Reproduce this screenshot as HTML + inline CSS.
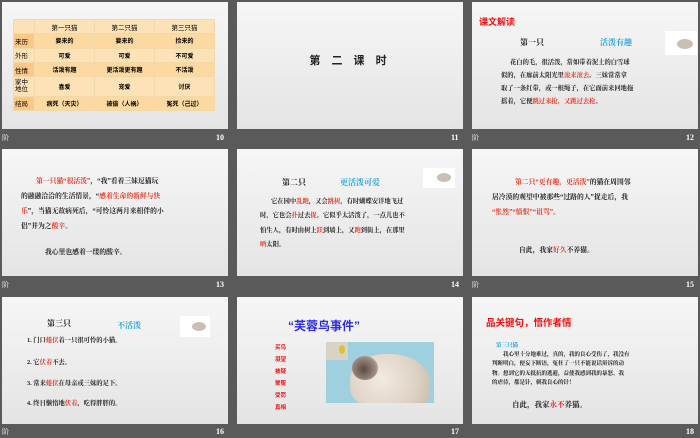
<!DOCTYPE html>
<html><head><meta charset="utf-8"><style>
*{margin:0;padding:0;box-sizing:border-box}
body{width:700px;height:438px;background:#5a5a5a;position:relative;overflow:hidden;font-family:"Liberation Serif","Noto Serif CJK SC",serif;}
.s{position:absolute;width:226px;height:127px;background:linear-gradient(#f6f6f6,#e4e4e4);overflow:hidden}
.a{position:absolute;white-space:nowrap}
.r{color:#e8321e}.b{color:#1aa3e0}
.lab{position:absolute;color:#fff;font-size:8px;font-weight:bold}
.p{position:absolute;font-size:6.3px;font-weight:bold;color:#222;white-space:nowrap}
table{border-collapse:collapse;position:absolute;left:11px;top:17px;width:202px;height:92px;font-size:6px;font-family:"Liberation Sans","Noto Sans CJK SC",sans-serif}
td{border:1px solid #f3d9a8;text-align:center;background:#fbd9a0;font-weight:bold}
tr:first-child td{background:#fcd6a0;font-weight:normal;font-size:6.5px}
td.h{background:#fbc888;font-weight:normal;font-size:6.5px;text-align:left;padding-left:1px}
tr:nth-child(odd) td{background:#fde2b8}
.cat{position:absolute;background:#fff}
</style></head><body>

<!-- slide 10 -->
<div class="s" style="left:2px;top:2px">
<table>
<tr><td class="h" style="width:21px"></td><td>第一只猫</td><td>第二只猫</td><td>第三只猫</td></tr>
<tr><td class="h">来历</td><td>要来的</td><td>要来的</td><td>捡来的</td></tr>
<tr><td class="h">外形</td><td>可爱</td><td>可爱</td><td>不可爱</td></tr>
<tr><td class="h">性情</td><td>活泼有趣</td><td>更活泼更有趣</td><td>不活泼</td></tr>
<tr><td class="h" style="line-height:7px">家中<br>地位</td><td>喜爱</td><td>宠爱</td><td>讨厌</td></tr>
<tr><td class="h">结局</td><td>病死（天灾）</td><td>被偷（人祸）</td><td>冤死（己过）</td></tr>
</table>
</div>
<div class="lab" style="left:2px;top:133px;font-weight:normal;font-size:7px">阶</div>
<div class="lab" style="left:216px;top:133px">10</div>

<!-- slide 11 -->
<div class="s" style="left:237px;top:2px">
<div class="a" style="left:0;width:226px;text-align:center;top:50px;font-size:11px;font-weight:bold;color:#222;font-family:'Liberation Sans','Noto Sans CJK SC',sans-serif;letter-spacing:4px">第 二 课 时</div>
</div>
<div class="lab" style="left:451px;top:133px">11</div>

<!-- slide 12 -->
<div class="s" style="left:472px;top:2px">
<div class="a" style="left:7px;top:13px;font-size:9px;font-weight:bold;color:#f01010;font-family:'Liberation Sans','Noto Sans CJK SC',sans-serif">课文解读</div>
<div class="a" style="left:48px;top:35px;font-size:8px;font-weight:bold;color:#222">第一只</div>
<div class="a b" style="left:128px;top:35px;font-size:8px;font-weight:bold">活泼有趣</div>
<div class="cat" style="left:193px;top:29px;width:32px;height:24px"><div style="position:absolute;left:12px;top:8px;width:16px;height:10px;border-radius:50%;background:#c9bfb2"></div></div>
<div class="p" style="left:38px;top:55px">花白的毛，很活泼，常如带着泥土的白雪球</div>
<div class="p" style="left:29px;top:68px">似的，在廊前太阳光里<span class="r">滚来滚去</span>。三妹常常拿</div>
<div class="p" style="left:29px;top:81px">取了一条红带，或一根绳子，在它面前来回地拖</div>
<div class="p" style="left:29px;top:94px">摇着，它便<span class="r">跳过来抢，又跳过去抢</span>。</div>
</div>
<div class="lab" style="left:472px;top:133px;font-weight:normal;font-size:7px">阶</div>
<div class="lab" style="left:686px;top:133px">12</div>

<!-- slide 13 -->
<div class="s" style="left:2px;top:149px">
<div class="p" style="left:34px;top:26px;font-size:6.8px"><span class="r">第一只猫“很活泼”</span>，“我”看着三妹逗猫玩</div>
<div class="p" style="left:19px;top:41px;font-size:6.8px">的融融洽洽的生活情景，“<span class="r">感着生命的新鲜与快</span></div>
<div class="p" style="left:19px;top:56px;font-size:6.8px"><span class="r">乐</span>”，当猫无故病死后，“可怜这两月来相伴的小</div>
<div class="p" style="left:19px;top:71px;font-size:6.8px">侣”并为之<span class="r">酸辛</span>。</div>
<div class="p" style="left:43px;top:97px;font-size:6.8px">我心里也感着一缕的酸辛。</div>
</div>
<div class="lab" style="left:2px;top:280px;font-weight:normal;font-size:7px">阶</div>
<div class="lab" style="left:216px;top:280px">13</div>

<!-- slide 14 -->
<div class="s" style="left:237px;top:149px">
<div class="a" style="left:45px;top:28px;font-size:8px;font-weight:bold;color:#222">第二只</div>
<div class="a b" style="left:103px;top:28px;font-size:8px;font-weight:bold">更活泼可爱</div>
<div class="cat" style="left:186px;top:19px;width:32px;height:20px"><div style="position:absolute;left:14px;top:5px;width:14px;height:9px;border-radius:50%;background:#c9bfb2"></div></div>
<div class="p" style="left:34px;top:47px">它在园中<span class="r">乱跑</span>，又会<span class="r">跳树</span>，有时蝴蝶安详地飞过</div>
<div class="p" style="left:23px;top:61px">时，它也会<span class="r">扑</span>过去<span class="r">捉</span>。它似乎太活泼了，一点儿也不</div>
<div class="p" style="left:23px;top:76px">怕生人，有时由树上<span class="r">跃</span>到墙上，又<span class="r">跑</span>到街上，在那里</div>
<div class="p" style="left:23px;top:90px"><span class="r">晒</span>太阳。</div>
</div>
<div class="lab" style="left:451px;top:280px">14</div>

<!-- slide 15 -->
<div class="s" style="left:472px;top:149px">
<div class="p" style="left:43px;top:27px;font-size:6.8px"><span class="r">第二只“更有趣，更活泼”</span>的猫在周围邻</div>
<div class="p" style="left:20px;top:42px;font-size:6.8px">居冷漠的观望中被那些“过路的人”捉走后，我</div>
<div class="p" style="left:20px;top:57px;font-size:6.8px"><span class="r">“怅然”“愤恨”“诅骂”</span>。</div>
<div class="p" style="left:47px;top:95px;font-size:6.8px">自此，我家<span class="r">好久</span>不养猫。</div>
</div>
<div class="lab" style="left:472px;top:280px;font-weight:normal;font-size:7px">阶</div>
<div class="lab" style="left:686px;top:280px">15</div>

<!-- slide 16 -->
<div class="s" style="left:2px;top:297px">
<div class="a" style="left:45px;top:21px;font-size:8px;font-weight:bold;color:#222">第三只</div>
<div class="a b" style="left:115px;top:23px;font-size:8px;font-weight:bold">不活泼</div>
<div class="cat" style="left:178px;top:19px;width:30px;height:21px"><div style="position:absolute;left:12px;top:6px;width:14px;height:9px;border-radius:50%;background:#c9bfb2"></div></div>
<div class="p" style="left:25px;top:38px">1. 门口<span class="r">蜷伏</span>着一只很可怜的小猫。</div>
<div class="p" style="left:25px;top:60px">2. 它<span class="r">伏着</span>不去。</div>
<div class="p" style="left:25px;top:81px">3. 常来<span class="r">蜷伏</span>在母亲或三妹的足下。</div>
<div class="p" style="left:25px;top:101px">4. 终日懒惰地<span class="r">伏着</span>，吃得胖胖的。</div>
</div>
<div class="lab" style="left:2px;top:427px;font-weight:normal;font-size:7px">阶</div>
<div class="lab" style="left:216px;top:427px">16</div>

<!-- slide 17 -->
<div class="s" style="left:237px;top:297px">
<div class="a" style="left:51px;top:20px;font-size:12px;font-weight:bold;color:#2b2bea;font-family:'Liberation Sans','Noto Sans CJK SC',sans-serif">“芙蓉鸟事件”</div>
<div style="position:absolute;left:38px;top:45px;font-size:5.5px;font-weight:bold;color:#f01010;line-height:12px;font-family:'Liberation Sans','Noto Sans CJK SC',sans-serif">买鸟<br>凝望<br>被疑<br>蒙冤<br>受罚<br>真相</div>
<div style="position:absolute;left:89px;top:45px;width:108px;height:61px;background:#9fd0dd;overflow:hidden">
<div style="position:absolute;left:0;top:0;width:22px;height:18px;background:#d8d3c4"></div>
<div style="position:absolute;left:13px;top:3px;width:6px;height:9px;border-radius:50%;background:#d8c23a"></div>
<div style="position:absolute;left:24px;top:12px;width:80px;height:56px;border-radius:45% 50% 30% 40%;background:radial-gradient(circle at 40% 45%,#f2ebe2,#ddd2c4 60%,#c8b9a6)"></div>
<div style="position:absolute;left:26px;top:14px;width:26px;height:24px;border-radius:50%;background:radial-gradient(circle at 45% 55%,#5a4a44,#9b8a80 60%,#e8e0d6)"></div>
</div>
</div>
<div class="lab" style="left:451px;top:427px">17</div>

<!-- slide 18 -->
<div class="s" style="left:472px;top:297px">
<div class="a" style="left:14px;top:18px;font-size:9.5px;font-weight:bold;color:#f01010;font-family:'Liberation Sans','Noto Sans CJK SC',sans-serif">品关键句，悟作者情</div>
<div class="a b" style="left:24px;top:44px;font-size:5.5px;font-weight:bold">第三只猫</div>
<div class="p" style="left:31px;top:53px;font-size:5.5px">我心里十分地难过，真的，我的良心受伤了，我没有</div>
<div class="p" style="left:20px;top:62px;font-size:5.5px">判断明白，便妄下断语，冤枉了一只不能说话辩诉的动</div>
<div class="p" style="left:20px;top:72px;font-size:5.5px">物。想到它的无抵抗的逃避，益使我感到我的暴怒、我</div>
<div class="p" style="left:20px;top:81px;font-size:5.5px">的虐待，都是针，刺我良心的针！</div>
<div class="p" style="left:40px;top:102px;font-size:7.5px">自此，我家<span style="color:#f01010">永不</span>养猫。</div>
</div>
<div class="lab" style="left:686px;top:427px">18</div>

</body></html>
